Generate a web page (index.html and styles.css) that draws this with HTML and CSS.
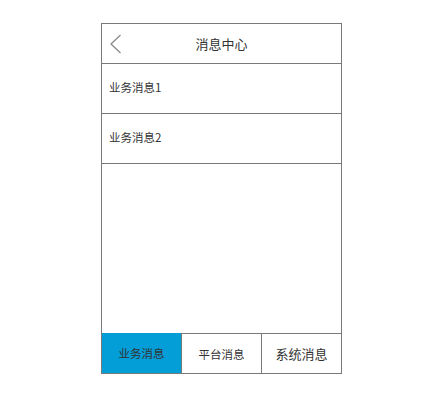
FILE: index.html
```html
<!DOCTYPE html>
<html lang="zh-CN">
<head>
<meta charset="utf-8">
<title>消息中心</title>
<link rel="stylesheet" href="styles.css">
</head>
<body>
<div class="phone">
  <div class="header">
    <svg class="back" width="12" height="20" viewBox="0 0 12 20">
      <polyline points="10.5,1 1,10 10.5,19" fill="none" stroke="#8a8a8a" stroke-width="1.3"/>
    </svg>
    <div class="title">消息中心</div>
    <div></div>
  </div>
  <div class="row">业务消息1</div>
  <div class="row">业务消息2</div>
  <div class="spacer"></div>
  <div class="tabs">
    <div class="tab active">业务消息</div>
    <div class="tab">平台消息</div>
    <div class="tab big">系统消息</div>
  </div>
</div>
</body>
</html>
```

FILE: styles.css
```css
html, body {
  margin: 0;
  padding: 0;
  background: #ffffff;
}
body {
  padding: 23px 0 0 101px;
  font-family: "Noto Sans CJK SC", "Noto Sans", sans-serif;
  color: #333333;
}
.phone {
  box-sizing: border-box;
  width: 241px;
  height: 351px;
  border: 1px solid #797979;
  display: flex;
  flex-direction: column;
}
.header {
  height: 39px;
  border-bottom: 1px solid #797979;
  display: grid;
  grid-template-columns: 1fr auto 1fr;
  align-items: center;
}
.back {
  display: block;
  margin-left: 8px;
}
.title {
  font-size: 13px;
  line-height: 16px;
}
.row {
  height: 49px;
  border-bottom: 1px solid #797979;
  display: flex;
  align-items: center;
  padding-left: 7px;
  padding-bottom: 3px;
  box-sizing: content-box;
  height: 46px;
  font-size: 11.5px;
}
.spacer {
  flex: 1;
}
.tabs {
  height: 40px;
  display: grid;
  grid-template-columns: 79px 80px 80px;
}
.tab {
  box-sizing: border-box;
  border-top: 1px solid #797979;
  border-left: 1px solid #797979;
  display: flex;
  align-items: center;
  justify-content: center;
  font-size: 11.5px;
}
.tab.active {
  border: none;
  background: #039dd8;
}
.tab.big {
  font-size: 13px;
}
```
